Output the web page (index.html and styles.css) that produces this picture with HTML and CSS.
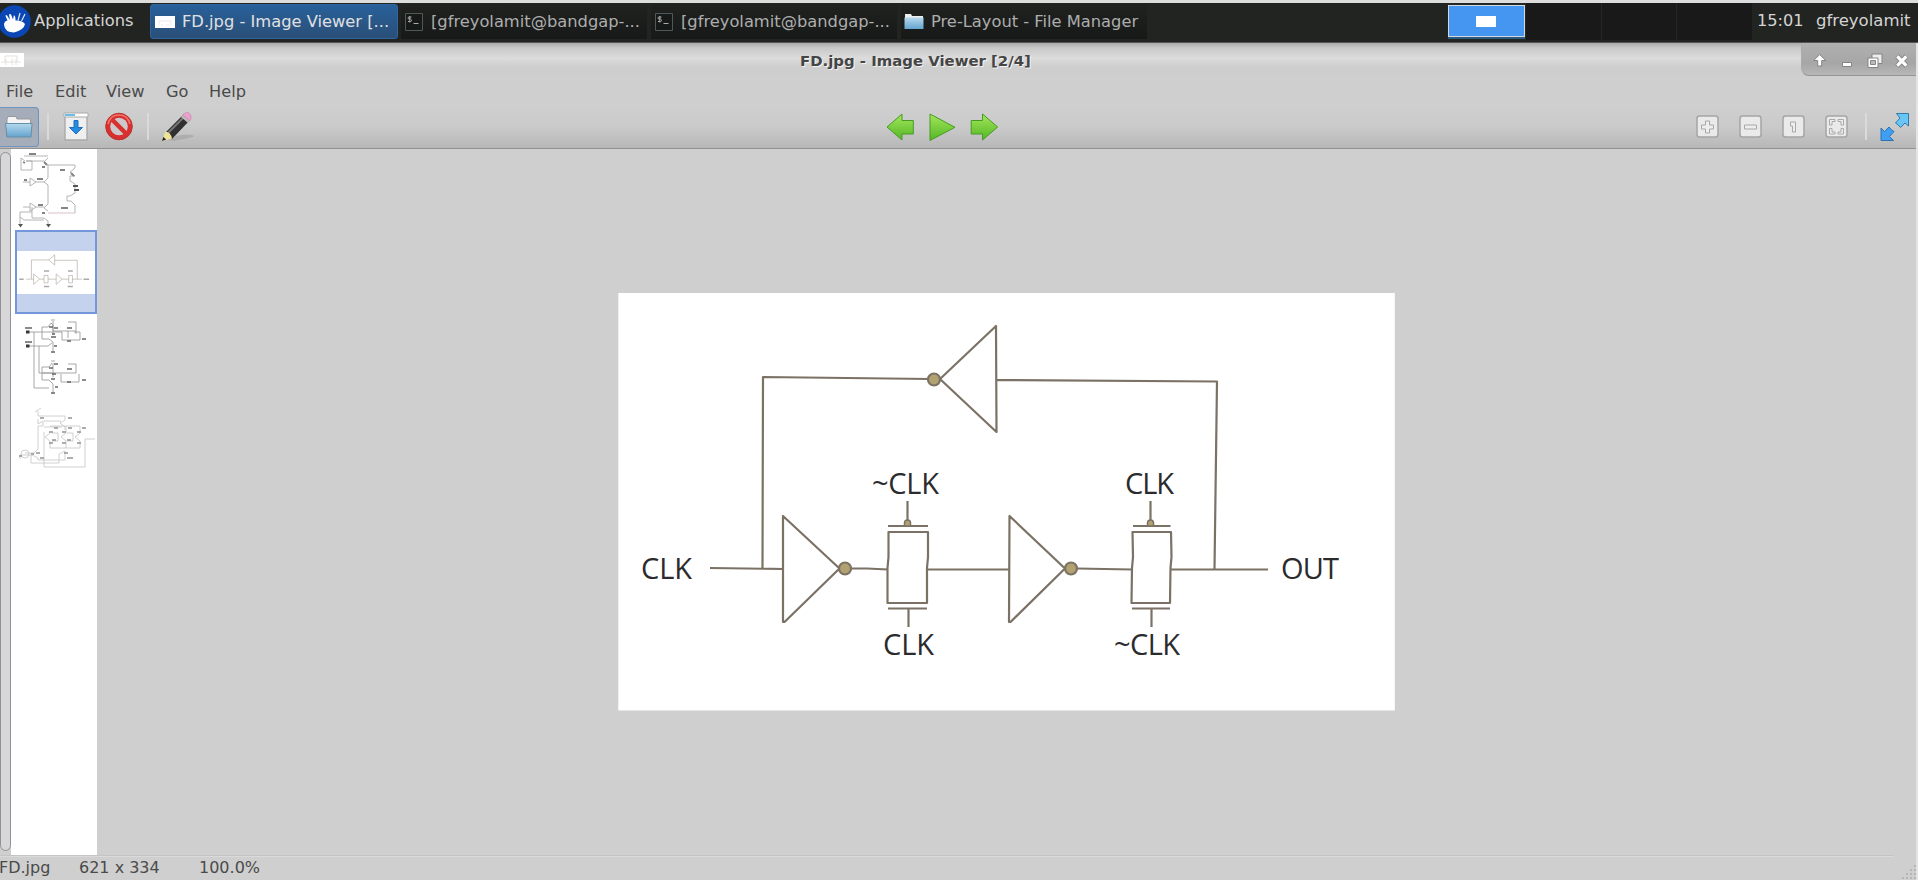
FILE: index.html
```html
<!DOCTYPE html>
<html lang="en">
<head>
<meta charset="utf-8">
<title>FD.jpg - Image Viewer [2/4]</title>
<link rel="stylesheet" href="styles.css">
</head>
<body>
<div class="screen">
  <header class="panel">
    <div class="apps">
      <svg class="mouse" width="31" height="34" viewBox="0 0 31 34"><circle cx="14.500" cy="17.500" r="16.300" fill="#0a47b4"/><path d="M4 21Q4 17 7.500 16.500L5.500 12Q5.800 10.500 7 11.500L10 16 9 10.500Q10 9.500 11 10.500L13 15.500 13.800 11.500Q15.500 11 15.500 16.500Q22 16 25 20Q24 26 14 28.500Q5 28.500 4 21Z" fill="#fff"/><path d="M18 16.500L20 9M21.500 17L25 10" stroke="#dfe8f8" stroke-width="1.200"/></svg>
      <span>Applications</span>
    </div>
    <div class="task active">
      <svg width="22" height="14" viewBox="0 0 22 14"><path d="M1 1h20v12H1z" fill="#fff"/><path d="M5 10V6h12v4M7 10h2m3 0h3" stroke="#e9e9e9" fill="none"/></svg>
      <span>FD.jpg - Image Viewer [...</span>
    </div>
    <div class="task">
      <svg width="18" height="18" viewBox="0 0 18 18"><path d="M.5.5h17v17H.5z" fill="#151918" stroke="#50585a"/><path d="M6.500 4H4.200Q3 4 3 5T4 6H5.500Q6.500 6.500 6.500 7.400T5.500 8.500H3M4.800 3v6.500M8.500 10.500h5" fill="none" stroke="#a9abaa" stroke-width="1"/></svg>
      <span>[gfreyolamit@bandgap-...</span>
    </div>
    <div class="task">
      <svg width="18" height="18" viewBox="0 0 18 18"><path d="M.5.5h17v17H.5z" fill="#151918" stroke="#50585a"/><path d="M6.500 4H4.200Q3 4 3 5T4 6H5.500Q6.500 6.500 6.500 7.400T5.500 8.500H3M4.800 3v6.500M8.500 10.500h5" fill="none" stroke="#a9abaa" stroke-width="1"/></svg>
      <span>[gfreyolamit@bandgap-...</span>
    </div>
    <div class="task wide">
      <svg width="20" height="17" viewBox="0 0 20 17"><path d="M1 15V1h6l1 2h11v12z" fill="#eee"/><path d="M.5 4.500h19v11.500H.5z" fill="url(#fold)"/></svg>
      <span>Pre-Layout - File Manager</span>
    </div>
    <div class="pager">
      <i class="desk on"><b></b></i><i class="desk"></i><i class="desk"></i><i class="desk"></i>
    </div>
    <span class="clock">15:01</span>
    <span class="user">gfreyolamit</span>
  </header>

  <div class="window">
    <div class="titlebar">
      <svg class="winicon" width="24" height="14" viewBox="0 0 24 14"><path d="M0 0h24v14H0z" fill="#fff"/><path d="M1 9h20M5 9V3h12v6M6 6v6M12 6v6M16 6v6" stroke="#e6dfdf" stroke-width="1" fill="none"/></svg>
      <h1>FD.jpg - Image Viewer [2/4]</h1>
      <div class="controls">
        <svg width="115" height="33" viewBox="0 0 115 33">
          <g stroke="#858585" stroke-linejoin="round" fill="#fff">
            <path d="M17.700 11.500l6 6h-4v5.500h-4v-5.500h-4z"/>
            <path d="M40.500 19.500h9v4h-9z"/>
            <path d="M70 11h10v9.500H70z" fill="#eee"/><path d="M66 15h10v9.500H66z"/><path d="M68.500 17.500h5v4h-5z" fill="#bbb"/>
          </g>
          <path d="M95 13l9.500 10M104.500 13L95 23" stroke="#858585" stroke-width="5"/><path d="M95.300 13.300l9 9.400M104.300 13.300L95.300 22.700" stroke="#fff" stroke-width="3.200"/>
        </svg>
      </div>
    </div>
    <nav class="menubar"><span class="m1">File</span><span class="m2">Edit</span><span class="m3">View</span><span class="m4">Go</span><span>Help</span></nav>
    <div class="toolbar">
      <div class="tools left">
        <div class="pressed"><svg width="28" height="24" viewBox="0 0 28 24"><path d="M2 21V4L3 1.500h8L12 4h13.500v17z" fill="#f4f4f4" stroke="#999"/><path d="M.5 8.500h26.500l-1 13.500h-24z" fill="url(#fold)" stroke="#678fa9"/></svg></div>
        <i class="sep s1"></i>
        <svg class="save" width="26" height="30" viewBox="0 0 26 30"><path d="M2 2h22v26H2z" fill="#efefef" stroke="#aaa" stroke-width="1.400"/><path d="M1 1h24v4H1z" fill="#fff" stroke="#aaa"/><path d="M2 2h10v2H2z" fill="#6bbde8"/><path d="M11 8.500h4v7h4.500L13 22l-6.500-6.500H11z" fill="#258be0" stroke="#1e70bf"/></svg>
        <svg class="stop" width="28" height="29" viewBox="0 0 28 29"><circle cx="14" cy="14.500" r="13.300" fill="#d8302f" stroke="#b9322f"/><circle cx="14" cy="14.500" r="8.800" fill="#cbc9ca"/><path d="M7.500 8l13 13" stroke="#d8302f" stroke-width="4.500"/><path d="M3 12Q5 3 14 3t11 9" fill="none" stroke="#f27469" stroke-width="1.600"/></svg>
        <i class="sep s2"></i>
        <svg class="pencil" width="34" height="32" viewBox="0 0 34 32"><path d="M8 29Q17 23 30 24T14 30z" fill="#999" opacity=".5"/><path d="M6 21L24 3l6 6-18 19z" fill="#303030"/><path d="M8 22L24 6" stroke="#777" stroke-width="2"/><path d="M2 30L5.500 20.500Q10.500 21 12 27.500z" fill="#eee498"/><path d="M2 30l1.400-4 2.800 2.600z" fill="#222"/><path d="M21 6l2-2.500 7 6.500-2 2z" fill="#bbb"/><path d="M23.500 3Q29-1 31 5V8l-1.500 2-6.500-6z" fill="#eda0cd" stroke="#b889a8" stroke-width=".6"/></svg>
      </div>
      <div class="tools nav">
        <svg width="28" height="30" viewBox="0 0 28 30"><path d="M1 14L16 1v6.500h11.300V21H16v6z" fill="url(#green)" stroke="#469b22"/></svg>
        <svg width="28" height="30" viewBox="0 0 28 30"><path d="M2 1l25 13.300L2 27.500z" fill="url(#green)" stroke="#469b22"/></svg>
        <svg width="28" height="30" viewBox="0 0 28 30"><path d="M27.700 14L12.500 1v6.500H1.200V21h11.300v6z" fill="url(#green)" stroke="#469b22"/></svg>
      </div>
      <div class="tools right">
        <svg width="23" height="24" viewBox="0 0 23 24"><rect x="1" y="1" width="21" height="21" rx="2.500" class="key"/><path d="M9.500 6h4v4h4v4h-4v4h-4v-4h-4v-4h4z" class="mark"/></svg>
        <svg width="23" height="24" viewBox="0 0 23 24"><rect x="1" y="1" width="21" height="21" rx="2.500" class="key"/><path d="M5.500 10h12v4h-12z" class="mark"/></svg>
        <svg width="23" height="24" viewBox="0 0 23 24"><rect x="1" y="1" width="21" height="21" rx="2.500" class="key"/><path d="M8.500 7h5v10h-3v-6h-2z" class="mark"/></svg>
        <svg width="23" height="24" viewBox="0 0 23 24"><rect x="1" y="1" width="21" height="21" rx="2.500" class="key"/><path d="M4.500 4.500h5.500v2H7v3.500H4.500zM18.500 4.500H13v2h3v3.500h2.500zM4.500 19H10v-2H7v-3.500H4.500zM18.500 19H13v-2h3v-3.500h2.500z" class="mark"/></svg>
        <i class="sep s3"></i>
        <svg class="full" width="30" height="30" viewBox="0 0 30 30"><path d="M16.500 1.500H28.500V14l-3.500-3-4.500 4.500q-2-3-5-4.500l4.500-5z" fill="#6ac6f6" stroke="#2c7cac"/><path d="M1 16l3.500 3.500 4.500-4.500q2 3 5 4.500l-4.500 5 4 4H1z" fill="#3f9ff3" stroke="#2c73b5"/></svg>
      </div>
    </div>

    <main class="body">
      <aside class="side">
        <div class="scroll"><i></i></div>
        <div class="thumbs">
          <svg class="thumb" width="82" height="80" viewBox="15 149 82 80">
            <g fill="none" stroke="#999" stroke-width=".8"><path d="M24 156h24M21 158v12h11v-9H26M21 158l4 3M26 161h18M48 158l-4 4M44 162l4 3v13l-4 4 4 3v19l-4 4 4 3M48 165h27v3l-5 4 5 4h-5v5l5 3v4M75 188v5l-5 3h-3v5h4l4 4v8M30 178v8l6-4zM23 182h7M36 182h8M30 203v8l6-4zM23 207h7M36 207h8M20 212h12v6h12l4 3v5M20 212v5l4 3h20M20 217v8M32 212V207"/><path d="M48 213h27" stroke="#c9a9b0"/></g>
            <g stroke="#777" stroke-width="1.800"><path d="M29 154h7M37 179h6M38 205h5M60 170h5M61 208h7M24 180h3M42 167h3M42 213h3M23 162l2 1M44 162l3 3M71 173l3 3"/><path d="M73 186h5M74 190h5" stroke="#444"/></g>
            <path d="M18 224h5l-2.500 3.500zM46 224h5l-2.500 3.500z" fill="#444"/>
          </svg>
          <div class="thumb selected">
            <svg width="78" height="43" viewBox="0 0 211 114"><g fill="none" stroke="#958b80" stroke-width="1.300"><path d="M25 75h20M39 75V23h47M86 23l16-14v28zM102 24h61v51M45 61v28l16-14zM61 75h12V65h11v20H73V75M84 75h22M106 61v28l16-14zM122 75h18V65h10v20h-10V75M150 75h26"/></g><path d="M6 75h12M180 75h15M73 53h14M73 95h14M138 53h13M137 95h14" stroke="#aaa" stroke-width="4"/></svg>
          </div>
          <svg class="thumb third" width="82" height="88" viewBox="15 314 82 88">
            <g fill="none" stroke="#888" stroke-width=".8"><path d="M27 331h15v-5h6l3-4 2 2v6h23v-9h-8M42 331h20v8h18M27 345h21l4-3M34 331v56h15M39 345v27h13M42 331v7h7l4 3v9M68 330v7M76 330v3M80 339v-8h-6M42 372v-6h7l3-4M42 372h34v-9h-8M42 372v7h7l4 4v9M61 373v8h18v-8M51 319h4M51 360h4M53 320v14M53 362v14"/></g>
            <path d="M26 331h3.500M26 345h3.500" stroke="#222" stroke-width="3"/>
            <g stroke="#555" stroke-width="1.700"><path d="M25 327h7M25 341h7M49 326h4M54 327h4M52 333h3M51 336h5M67 327h5M67 340h4M54 345h3M51 351h4M49 367h4M54 363h4M52 373h4M51 378h4M67 368h5M67 381h4M55 386h3M51 392h4M82 338h4M82 379h4"/></g>
          </svg>
          <svg class="thumb fourth" width="82" height="70" viewBox="15 402 82 70">
            <g fill="none" stroke="#bbb" stroke-width=".75"><path d="M35 411l6-4M38 410v5h27v4l-5 3 5 4v3M38 418v5l5-3v5h-5v23l-4 4h-9M44 420h17M20 454h12l6 3v2M20 454v4M31 454v8h28v-9l6-3v9M38 459h27M44 426h18M44 431v35h41v-28h10M50 425h30v7l-5 4 5 4v7H50v-7l-5-4 5-4M66 425v7l-5 4 5 4v7M52 432h6v8h-6M67 432h6v8h-6"/><circle cx="25" cy="453" r="4"/></g>
            <path d="M40 417h4M68 417h4M54 427h4M68 427h4M82 427h4M49 431h4M62 431h4M77 431h4M52 439h4M67 439h4M49 442h4M62 442h4M77 442h4M36 452h4M64 452h4M40 457h4M67 457h6M19 455h3M31 453h3" stroke="#888" stroke-width="1.400"/>
          </svg>
        </div>
      </aside>
      <section class="canvas">
        <svg class="photo" width="777" height="418" viewBox="618 293 777 418">
          <rect x="618.300" y="293" width="776.500" height="417.500" fill="#fff"/>
          <g fill="none" stroke="#7b7265" stroke-width="2.200" stroke-linejoin="round">
            <path d="M710 568l73 1M762.500 569l.500-192 167 2M940 379l56-53 .500 106zM997 380l220 1.500-2.500 187.500M783 516v106h1.500l55-53.500zM851 568.500h16l21 1M888.500 532h39.500v25l-1 11v35h-39.500v-35l1-11zM888 526h40M907.500 501v20M888 608.500h39M908.500 609v18M928 569.500h81M1009.500 516l-.500 106h1.500l54.500-53.500zM1077 568.500l55 1M1132.500 532h38.500l.500 25-1 11-.500 35h-38.500l.500-35 1-11zM1133 526h37.500M1150.500 501v20M1132 608.500h38M1151.500 609v18M1171 569.500h97"/>
            <g fill="#b2a272"><circle cx="934" cy="379.500" r="6"/><circle cx="845" cy="568.500" r="6"/><circle cx="1071" cy="568.500" r="6"/><path d="M904.500 526v-3q0-3 3-3t3 3v3zM1147.500 526v-3q0-3 3-3t3 3v3z" stroke-width="1.500"/></g>
          </g>
          <g class="labels">
            <text x="641" y="578.500" textLength="51">CLK</text>
            <text x="872" y="494" textLength="67">~CLK</text>
            <text x="883" y="654.500" textLength="51">CLK</text>
            <text x="1125" y="494" textLength="49">CLK</text>
            <text x="1114" y="654.500" textLength="66">~CLK</text>
            <text x="1281" y="578.500" textLength="58">OUT</text>
          </g>
        </svg>
      </section>
    </main>
    <footer class="status">
      <span class="f1">FD.jpg</span><span class="f2">621 x 334</span><span class="f3">100.0%</span>
      <svg width="15" height="15" viewBox="0 0 15 15"><path d="M1 13h15M5 9h11M9 5h7M13 1h3" stroke="#b5b5b5" stroke-width="2" stroke-dasharray="2 2"/></svg>
    </footer>
  </div>
</div>
<svg width="0" height="0" class="defs"><defs>
  <linearGradient id="fold" x2="0" y2="1"><stop stop-color="#b5d8ed"/><stop offset="1" stop-color="#65a4cf"/></linearGradient>
  <linearGradient id="green" x2="0" y2="1"><stop stop-color="#a4e65c"/><stop offset="1" stop-color="#53b623"/></linearGradient>
</defs></svg>
</body>
</html>
```
FILE: styles.css
```css
* { box-sizing: border-box; }
body { margin: 0; width: 1918px; height: 880px; overflow: hidden; font-family: "DejaVu Sans", sans-serif; font-size: 16.2px; color: #4a4a4a; background: #cfcfcf; }
svg { display: block; flex: none; }
.defs { position: absolute; }
.screen { display: flex; flex-direction: column; height: 880px; border-top: 3px solid #ddd; white-space: nowrap; }
.panel { display: flex; flex: none; height: 40px; background: #222422; border-bottom: 1px solid #555; color: #d4d4d4; line-height: 36px; }
.apps { display: flex; width: 150px; flex: none; font-size: 16.3px; }
.mouse { margin: 1px 3px 0 0; }
.task { display: flex; align-items: center; width: 246px; margin: 1px 4px 2px 0; height: 35px; padding-left: 4px; background: linear-gradient(#202220, #171918); color: #adadad; font-size: 16.3px; flex: none; }
.task svg { margin-right: 8px; }
.task.active { width: 248px; margin-right: 3px; padding-left: 3px; background: linear-gradient(#28609a, #2a4f78); border: 1px solid #3065a0; border-radius: 3px; color: #e0e0e0; }
.task.active svg { margin-right: 6px; }
.task.wide { padding-left: 3px; margin-right: 301px; }
.task.wide svg { margin-right: 7px; }
.pager { display: flex; width: 304px; flex: none; gap: 1px; background: #252725; height: 37px; }
.desk { flex: 1; background: #191919; }
.desk.on { display: flex; align-items: center; justify-content: center; margin-top: 2px; height: 32px; border: 1px solid #d3d9e0; background: #4596f1; box-shadow: 0 2px #285a82; }
.desk.on b { width: 20px; height: 11px; background: #fff; }
.clock { width: 64px; padding-left: 5px; flex: none; }
.user { width: 97px; flex: none; font-size: 16.5px; }
.window { flex: 1; display: flex; flex-direction: column; min-height: 0; border-right: 2px solid #e4e4e4; }
.titlebar { display: flex; flex: none; height: 34px; background: linear-gradient(#aaa, #c8c8c8 5px, #dcdcdc 15px, #d2d2d2 21px, #cecece 24px); }
.winicon { margin-top: 10px; }
h1 { flex: 1; margin: 0 0 0 776px; font-size: 14.9px; line-height: 37px; color: #454545; text-shadow: 1px 1px #f4f4f4; }
.controls { width: 115px; height: 33px; border-bottom: 1px solid #959595; border-left: 1px solid #aaa; border-radius: 0 0 0 8px; background: linear-gradient(#b0b0b0, #a6a6a6 20px, #b7b7b7); }
.menubar { display: flex; flex: none; height: 30px; padding-left: 6px; line-height: 29px; }
.m1 { width: 49px; } .m2 { width: 51px; } .m3 { width: 60px; } .m4 { width: 43px; }
.toolbar { display: flex; flex: none; height: 42px; border-bottom: 1px solid #929292; background: linear-gradient(#cfcfcf, #cbcacb 20px, #b8b7b8); }
.tools { display: flex; align-items: flex-start; }
.left { width: 887px; }
.pressed { display: flex; align-items: center; width: 39px; height: 40px; border: 1px solid #6e94bd; border-left: 0; border-radius: 0 4px 4px 0; background: #a5acba; padding-left: 5px; }
.sep { width: 2px; height: 27px; margin-top: 6px; background: #dadada; }
.s1 { margin-left: 8px; } .save { margin: 5px 0 0 14px; } .stop { margin: 5px 0 0 16px; } .s2 { margin-left: 14px; } .pencil { margin: 4px 0 0 11px; }
.nav { gap: 14px; padding-top: 6px; flex: 1; margin-left: -1px; }
.right { padding-right: 6px; }
.right > svg { margin: 8px 20px 0 0; }
.key { fill: #eaeaea; stroke: #a5a5a5; stroke-width: 1.5; }
.mark { fill: #eee; stroke: #a8a8a8; }
.s3 { margin: 6px 13px 0 -3px; }
.right > .full { margin: 5px 0 0; }
.body { display: flex; flex: 1; min-height: 0; }
.side { display: flex; width: 97px; background: #fff; flex: none; }
.scroll { width: 11px; background: #cfcfcf; padding: 3px 0 4px; flex: none; margin-right: 4px; }
.scroll i { display: block; height: 100%; border: 1.5px solid #929292; border-radius: 6px; background: #d7d6d8; }
.thumbs { width: 82px; }
.thumb { opacity: .9; }
.selected { display: flex; flex-direction: column; justify-content: center; height: 84px; margin-top: 1px; border: 2px solid #7496da; background: #c4d2ed; opacity: 1; }
.selected svg { background: #fff; }
.third { margin-top: 1px; }
.canvas { flex: 1; background: #cfcfcf; padding: 144px 0 0 521px; }
.labels { font: 29px "Open Sans", "Noto Sans", sans-serif; fill: #2b2b2e; }
.status { display: flex; align-items: flex-end; flex: none; height: 25px; line-height: 25px; font-size: 16px; background: linear-gradient(#c4c4c4 1px, #dadada 1px 2px, #cfcfcf 2px) no-repeat 0 0 / 1893px 100%; }
.f1 { width: 79px; text-indent: -1px; } .f2 { width: 120px; } .f3 { flex: 1; }
```
